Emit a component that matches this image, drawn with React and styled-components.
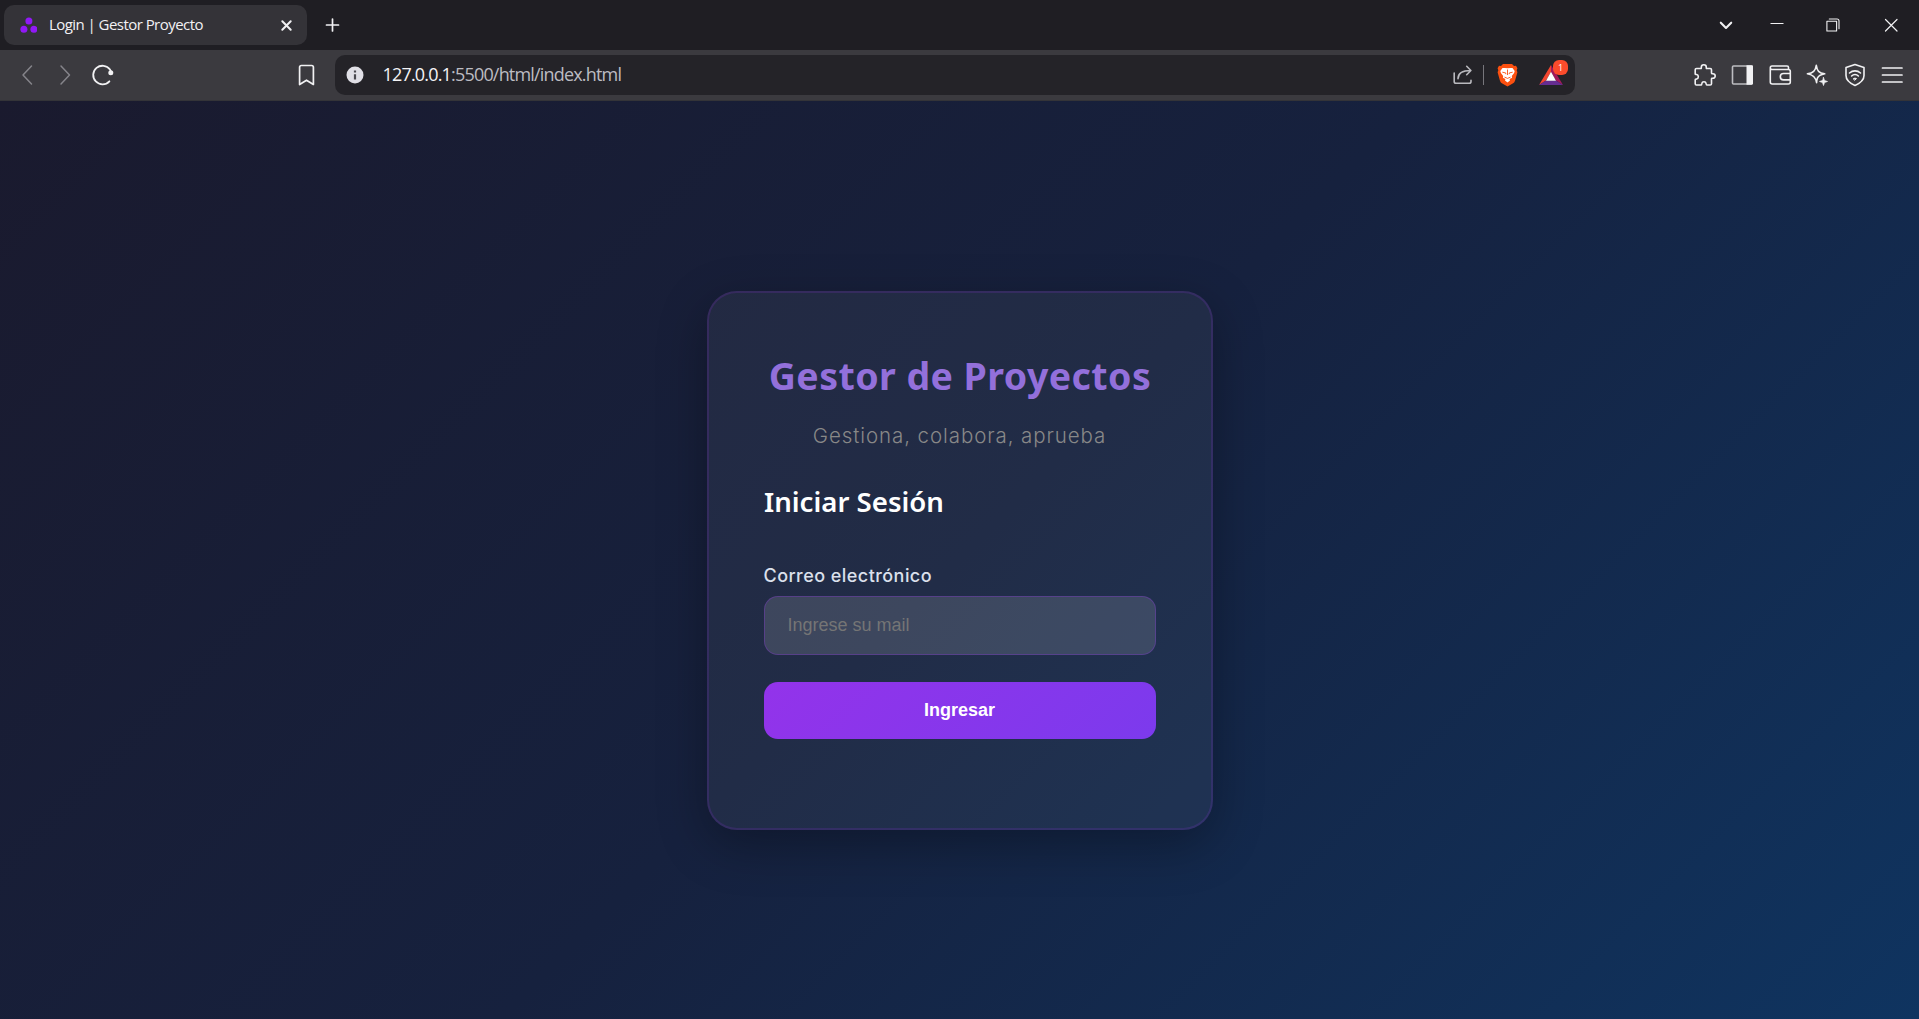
import React from "react";
import styled, { createGlobalStyle } from "styled-components";

const ui = '"Open Sans", "Noto Sans", sans-serif';
const heading = '"Noto Sans", sans-serif';
const body = '"Inter", sans-serif';

const GlobalStyle = createGlobalStyle`
  * { box-sizing: border-box; }
  html, body { margin: 0; padding: 0; overflow: hidden; }
  body { font-family: ${body}; }
`;

const Window = styled.div`
  display: flex;
  flex-direction: column;
  width: 100vw;
  height: 100vh;
`;

const TabStrip = styled.div`
  display: flex;
  align-items: center;
  flex: none;
  height: 50px;
  padding: 0 1px 0 4px;
  background: #1f1e23;
`;

const Tab = styled.div`
  display: flex;
  align-items: center;
  width: 303px;
  height: 40px;
  padding: 0 14px 0 16px;
  border-radius: 10px;
  background: #343338;
`;

const TabTitle = styled.span`
  flex: 1;
  margin: 0 0 2px 12px;
  color: #f2f1f4;
  font: 400 15px/20px ${ui};
  letter-spacing: -0.55px;
  white-space: nowrap;
`;

const NewTab = styled.div`
  display: flex;
  flex: 1;
  margin-left: 17px;
`;

const WindowControls = styled.div`
  display: flex;
  align-items: center;
`;

const Control = styled.div`
  display: flex;
  justify-content: center;
  width: ${(p) => p.$width}px;
`;

const Toolbar = styled.div`
  display: flex;
  align-items: center;
  flex: none;
  height: 51px;
  padding: 0 15px 1px 15px;
  background: #3b3a3f;
  border-bottom: 1px solid #343438;
`;

const NavGroup = styled.div`
  display: flex;
  align-items: center;
  width: 281px;
  gap: 14px;
`;

const Bookmark = styled.div`
  display: flex;
  width: 39px;
`;

const AddressBar = styled.div`
  display: flex;
  align-items: center;
  width: 1240px;
  height: 40px;
  padding: 0 6px 0 11px;
  border-radius: 10px;
  background: #242328;
`;

const Url = styled.span`
  flex: 1;
  margin: 0 0 1px 18.5px;
  font: 400 18px/24px ${ui};
  letter-spacing: -0.82px;
  color: #bcbcc2;
`;

const Host = styled.span`
  color: #f4f4f6;
`;

const Divider = styled.div`
  width: 1px;
  height: 20px;
  margin: 0 13px 0 10px;
  background: #77767c;
`;

const Rewards = styled.div`
  position: relative;
  display: flex;
  margin-left: 21px;
  width: 30px;
  height: 24px;
  align-items: center;
`;

const Badge = styled.span`
  position: absolute;
  top: -3px;
  right: 1px;
  width: 15px;
  height: 15px;
  border-radius: 6px;
  background: #fb4b2c;
  color: #fff;
  font: 400 9px/15px ${ui};
  text-align: center;
`;

const Extensions = styled.div`
  display: flex;
  flex: 1;
  justify-content: flex-end;
  gap: 13.5px;
`;

const Page = styled.main`
  display: flex;
  flex: 1;
  align-items: center;
  justify-content: center;
  background: linear-gradient(135deg, #1a1a2e 0%, #16213e 50%, #0f3460 100%);
`;

const Card = styled.section`
  display: flex;
  flex-direction: column;
  width: 506px;
  height: 539px;
  padding: 54px 55px;
  border: 2px solid rgba(147, 51, 234, 0.17);
  border-radius: 30px;
  background: rgba(255, 255, 255, 0.05);
  box-shadow: 0 15px 50px rgba(0, 0, 0, 0.3);
`;

const Title = styled.h1`
  margin: 0 0 0 1px;
  height: 58px;
  color: #9370db;
  font: 700 37.5px/58px ${heading};
  letter-spacing: 0.44px;
  text-align: center;
  white-space: nowrap;
`;

const Subtitle = styled.p`
  margin: 16px 0 0;
  height: 28px;
  color: #888;
  font: 300 20.5px/30px ${body};
  letter-spacing: 0.92px;
  text-align: center;
`;

const FormTitle = styled.h2`
  margin: 32px 0 0 0.5px;
  height: 40px;
  color: #fff;
  font: 600 27.6px/40px ${heading};
`;

const Label = styled.label`
  margin-top: 42px;
  height: 26px;
  color: #dbe0ec;
  font: 500 18px/26px ${body};
  letter-spacing: 0.45px;
`;

const Field = styled.input`
  flex: none;
  width: 392px;
  height: 59px;
  margin: 7px 0 0;
  padding: 0 23px;
  border: 1px solid rgba(147, 51, 234, 0.3);
  border-radius: 14px;
  outline: none;
  background: rgba(255, 255, 255, 0.13);
  color: #fff;
  font: 400 18px "Liberation Sans", sans-serif;
  &::placeholder { color: #757575; opacity: 1; }
`;

const Submit = styled.button`
  flex: none;
  width: 392px;
  height: 57px;
  margin-top: 27px;
  padding: 0;
  border: 0;
  border-radius: 14px;
  background: linear-gradient(135deg, #9333ea, #7c3aed);
  color: #fff;
  font: 700 18px "Liberation Sans", sans-serif;
`;

const Glyph = ({ w = 24, h = w, color = "#f1f1f3", sw = 1.6, children }) => (
  <svg
    width={w}
    height={h}
    viewBox={`0 0 ${w} ${h}`}
    fill="none"
    stroke={color}
    strokeWidth={sw}
    strokeLinecap="round"
    strokeLinejoin="round"
  >
    {children}
  </svg>
);

const Favicon = () => (
  <svg width="17" height="17" viewBox="0 0 17 17" fill="#9119f5">
    <circle cx="8.9" cy="4" r="3.5" />
    <circle cx="3.9" cy="12.2" r="3.5" />
    <circle cx="13.9" cy="12.2" r="3.5" />
  </svg>
);

const LionShield = () => (
  <svg width="21" height="24" viewBox="0 0 21 24">
    <path
      d="M6 1h9l2 2 2-.2 1.4 2.5-.7 2 .7 2-2.3 8.2c-.5 1.6-1.3 2.4-2.4 3.1l-5.2 3-5.2-3c-1.1-.7-1.9-1.5-2.4-3.1L.6 9.3l.7-2-.7-2L2 2.800l2 .2z"
      fill="#fb5010"
    />
    <path
      d="M10.500 5.300 13.300 4.900 15.500 5 17.700 7.900 17.100 10 14.800 13 15.100 14.800 12.600 16 13 17.400 10.500 19.500 8 17.400 8.400 16 5.900 14.800 6.200 13 3.900 10 3.300 7.900 5.500 5 7.700 4.900z"
      fill="#fff"
    />
    <path
      d="M5.300 9.200 8.600 9.900 8.900 11.200M15.700 9.200 12.400 9.900 12.100 11.200M10.500 6.500v5.500M7.500 14.100 10.500 15.400 13.500 14.100"
      fill="none"
      stroke="#fb5010"
      strokeWidth=".9"
    />
  </svg>
);

const Triangle = () => (
  <svg width="24" height="20" viewBox="0 0 24 20">
    <path d="M12 0 0 20 7 15.500 12 7z" fill="#f2452f" />
    <path d="M12 0 24 20 17 15.500 12 7z" fill="#a3195b" />
    <path d="M0 20h24l-7-4.500H7z" fill="#662d91" />
    <path d="M12 6.800 17 15.700H7z" fill="#fff" />
  </svg>
);

export default function App() {
  return (
    <>
      <GlobalStyle />
      <Window>
        <TabStrip>
          <Tab>
            <Favicon />
            <TabTitle>Login | Gestor Proyecto</TabTitle>
            <Glyph w={13} sw={2}>
              <path d="M2.300 2.300 10.700 10.700M10.700 2.300 2.300 10.700" />
            </Glyph>
          </Tab>
          <NewTab>
            <Glyph w={16} sw={1.7}>
              <path d="M8.500 2v12M2.500 8h12" />
            </Glyph>
          </NewTab>
          <WindowControls>
            <Control $width={51}>
              <Glyph w={16} sw={2.1}>
                <path d="M2.800 5.700 8 10.900 13.200 5.700" />
              </Glyph>
            </Control>
            <Control $width={51}>
              <Glyph w={14} sw={1}>
                <path d="M.5 5.500h13" strokeLinecap="butt" />
              </Glyph>
            </Control>
            <Control $width={62}>
              <Glyph w={14} sw={1.1}>
                <path d="M.9 3.300h9.700V13H.9z" />
                <path d="M3.300 1h7.700a2 2 0 0 1 2 2v7.700" />
              </Glyph>
            </Control>
            <Control $width={54}>
              <Glyph w={15} sw={1.2}>
                <path d="M1.500 1.500 13 13M13 1.500 1.500 13" />
              </Glyph>
            </Control>
          </WindowControls>
        </TabStrip>

        <Toolbar>
          <NavGroup>
            <Glyph w={24} color="#85848a" sw={1.500}>
              <path d="M16.500 3 8 12l8.500 9" />
            </Glyph>
            <Glyph w={24} color="#85848a" sw={1.500}>
              <path d="M8 3l8.500 9L8 21" />
            </Glyph>
            <Glyph w={24} sw={1.800}>
              <path d="M18.400 18.300A9.300 9.300 0 1 1 19 6.500l1 2.200" />
              <circle cx="19.800" cy="9.700" r="2.500" fill="#f1f1f3" stroke="none" />
            </Glyph>
          </NavGroup>
          <Bookmark>
            <Glyph w={21} h={24} sw={1.700}>
              <path d="M3.600 4.200c0-1 .6-1.700 1.700-1.700h10.400c1.100 0 1.700.7 1.700 1.700v17.300l-6.900-4.300-6.900 4.300z" />
            </Glyph>
          </Bookmark>
          <AddressBar>
            <svg width="18" height="18" viewBox="0 0 18 18">
              <circle cx="9" cy="9" r="8.500" fill="#e0dfe6" />
              <path d="M9 4.400v2M9 8.200v5.200" stroke="#4a494f" strokeWidth="2.200" />
            </svg>
            <Url>
              <Host>127.0.0.1</Host>:5500/html/index.html
            </Url>
            <Glyph w={20} h={20} color="#b9b9be" sw={1.600}>
              <path d="M1.200 8v8.500c0 1 .7 1.800 1.800 1.800h13.200c1.100 0 1.800-.7 1.800-1.800v-1.200M5 13.700c0-5 3.600-8.200 12.800-8.200M13.700 1.300l4.200 4.200-4.200 4.200" />
            </Glyph>
            <Divider />
            <LionShield />
            <Rewards>
              <Triangle />
              <Badge>1</Badge>
            </Rewards>
          </AddressBar>
          <Extensions>
            <Glyph>
              <path d="M3.500 5.500h4.300c.7 0 .5-.8.500-1.300a2.500 2.500 0 0 1 5 0c0 .6-.2 1.300.5 1.300h3.400c.8 0 1.300.5 1.300 1.300V10c0 .7.700.8 1.400.7a2.300 2.300 0 0 1 0 4.600c-.7-.1-1.400 0-1.400.7v4.700c0 .8-.5 1.300-1.300 1.300h-3.400c-.7 0-.4-.8-.7-1.500a2.200 2.200 0 0 0-4.300 0c-.2.700 0 1.500-.7 1.500H3.500c-.8 0-1.300-.5-1.300-1.300v-4c0-.8.800-.5 1.500-.7a2.300 2.300 0 0 0 0-4.400c-.7-.2-1.500 0-1.500-.7V6.800c0-.8.500-1.300 1.300-1.300z" />
            </Glyph>
            <Glyph>
              <rect x="2.500" y="3" width="19.500" height="18" rx="1" stroke="#bdbdc1" />
              <path d="M16.500 2.300h5.300c.7 0 1.200.5 1.200 1.200v17c0 .7-.5 1.200-1.200 1.200h-5.300z" fill="#f1f1f3" stroke="none" />
            </Glyph>
            <Glyph>
              <path d="M2.300 5.200V19c0 1.200.7 2 2 2h16c1.200 0 2-.8 2-2V8.200c0-1.200-.8-1.700-2-1.700H4c-1.100 0-1.700-.6-1.700-1.700S3 3 4 3h15c1 0 1.500.6 1.500 1.500v2M22 10.500h-6.500a3.200 3.200 0 0 0 0 6.400H22" />
            </Glyph>
            <Glyph>
              <path d="M11.300 2.300c.8 5.600 2.500 7.700 8.400 8.500-4 .8-6.200 1.800-7.300 4.300-.6 1.400-.8 3-.8 4.600-.9-5.500-3.200-7.900-9.200-8.900 5.800-.8 8-2.900 8.900-8.500z" />
              <path d="M18.500 14.500l1 3 3 1-3 1-1 3-1-3-3-1 3-1z" fill="#f1f1f3" strokeWidth=".7" />
            </Glyph>
            <Glyph>
              <path d="M12 1.500l9 3v8c0 4.800-4.500 8-9 10-4.500-2-9-5.200-9-10v-8z" />
              <path d="M6.500 10a8.200 8.200 0 0 1 11 0M8.600 13a5 5 0 0 1 6.800 0" />
              <path d="M10.500 15.600a2.500 2.500 0 0 1 3 0L12 17z" fill="#f1f1f3" strokeWidth="1" />
            </Glyph>
            <Glyph sw={1.700}>
              <path d="M2.500 5h19.500M2.500 12h19.500M2.500 19h19.500" />
            </Glyph>
          </Extensions>
        </Toolbar>

        <Page>
          <Card>
            <Title>Gestor de Proyectos</Title>
            <Subtitle>Gestiona, colabora, aprueba</Subtitle>
            <FormTitle>Iniciar Sesión</FormTitle>
            <Label htmlFor="mail">Correo electrónico</Label>
            <Field id="mail" type="email" placeholder="Ingrese su mail" />
            <Submit type="button">Ingresar</Submit>
          </Card>
        </Page>
      </Window>
    </>
  );
}
